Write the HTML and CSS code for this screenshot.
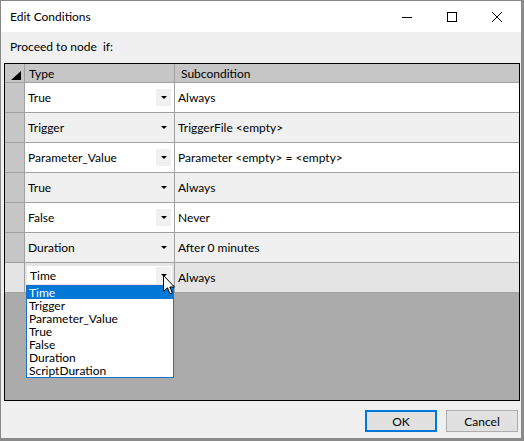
FILE: index.html
```html
<!DOCTYPE html>
<html>
<head>
<meta charset="utf-8">
<link rel="stylesheet" href="styles.css">
</head>
<body>
<div class="window">
  <div class="titlebar">
    <span class="title">Edit Conditions</span>
    <div class="controls">
      <span class="ctl"><svg width="10" height="10" viewBox="0 0 10 10"><path d="M0 5.5H10" stroke="#000" stroke-width="1"/></svg></span>
      <span class="ctl"><svg width="10" height="10" viewBox="0 0 10 10"><rect x="0.5" y="0.5" width="9" height="9" fill="none" stroke="#000" stroke-width="1"/></svg></span>
      <span class="ctl"><svg width="10" height="10" viewBox="0 0 10 10"><path d="M0 0L10 10M10 0L0 10" stroke="#000" stroke-width="1"/></svg></span>
    </div>
  </div>
  <div class="content">
    <div class="label">Proceed to node&nbsp; if:</div>
    <div class="grid">
      <div class="row header">
        <div class="rh corner"><svg width="10" height="9" viewBox="0 0 10 9"><polygon points="10,0 10,9 0,9" fill="#000"/></svg></div>
        <div class="c type">Type</div>
        <div class="c sub">Subcondition</div>
      </div>
      <div class="row white">
        <div class="rh"></div>
        <div class="c type"><span>True</span><span class="btn"><i class="tri"></i></span></div>
        <div class="c sub">Always</div>
      </div>
      <div class="row gray">
        <div class="rh"></div>
        <div class="c type"><span>Trigger</span><span class="btn"><i class="tri"></i></span></div>
        <div class="c sub">TriggerFile &lt;empty&gt;</div>
      </div>
      <div class="row white">
        <div class="rh"></div>
        <div class="c type"><span>Parameter_Value</span><span class="btn"><i class="tri"></i></span></div>
        <div class="c sub">Parameter &lt;empty&gt; = &lt;empty&gt;</div>
      </div>
      <div class="row gray">
        <div class="rh"></div>
        <div class="c type"><span>True</span><span class="btn"><i class="tri"></i></span></div>
        <div class="c sub">Always</div>
      </div>
      <div class="row white">
        <div class="rh"></div>
        <div class="c type"><span>False</span><span class="btn"><i class="tri"></i></span></div>
        <div class="c sub">Never</div>
      </div>
      <div class="row gray">
        <div class="rh"></div>
        <div class="c type"><span>Duration</span><span class="btn"><i class="tri"></i></span></div>
        <div class="c sub">After 0 minutes</div>
      </div>
      <div class="row edit">
        <div class="rh"></div>
        <div class="c type">
          <div class="combo"><span>Time</span><span class="btn"><i class="tri"></i></span></div>
          <div class="list">
            <div class="item sel">Time</div>
            <div class="item">Trigger</div>
            <div class="item">Parameter_Value</div>
            <div class="item">True</div>
            <div class="item">False</div>
            <div class="item">Duration</div>
            <div class="item">ScriptDuration</div>
          </div>
          <svg class="cursor" width="12" height="20" viewBox="0 0 12 20"><path d="M0.5 0.5V16.5L4.5 12.8L7 18.8L9.3 17.8L6.8 12H11.5Z" fill="#fff" stroke="#000" stroke-width="1" stroke-linejoin="round"/></svg>
        </div>
        <div class="c sub">Always</div>
      </div>
    </div>
    <div class="buttons">
      <button class="b ok">OK</button>
      <button class="b">Cancel</button>
    </div>
  </div>
</div>
</body>
</html>
```

FILE: styles.css
```css
* { box-sizing: border-box; }
html, body { margin: 0; padding: 0; background: #fff; }
body { font-family: "Segoe UI", Lato, "Noto Sans", sans-serif; font-size: 12px; color: #000; }

.window {
  width: 524px; height: 441px;
  border-left: 1px solid #888;
  border-top: 1px solid #888;
  border-right: 3px solid #8a8a8a;
  border-bottom: 3px solid #8a8a8a;
  display: flex; flex-direction: column;
  background: #f0f0f0;
}
.titlebar {
  height: 31px; background: #fff;
  display: flex; align-items: center;
  padding-left: 9px; padding-right: 2px;
}
.title { flex: 1; font-size: 12px; }
.controls { display: flex; height: 100%; }
.ctl { width: 45px; display: flex; align-items: center; justify-content: center; }
.ctl svg { display: block; }

.content { flex: 1; display: flex; flex-direction: column; padding: 0 0 0 3px; }
.label { margin: 7px 0 0 6px; height: 24px; line-height: 15px; }

.grid {
  width: 516px; height: 338px;
  border: 1px solid #000;
  background: #ababab;
  display: flex; flex-direction: column;
}
.row { display: flex; height: 30px; }
.row.header { height: 19px; background: #c6c6c6; }
.rh {
  width: 20px; flex: none;
  background: #c6c6c6;
  border-right: 1px solid #a0a0a0;
  border-bottom: 1px solid #a0a0a0;
}
.corner { display: flex; align-items: flex-end; justify-content: flex-end; padding: 0 3px 2px 0; }
.corner svg { display: block; }
.c {
  display: flex; align-items: center;
  border-right: 1px solid #a0a0a0;
  border-bottom: 1px solid #a0a0a0;
  white-space: nowrap;
}
.type { width: 150px; flex: none; padding-left: 3px; justify-content: space-between; padding-right: 3px; position: relative; }
.sub { flex: 1; padding-left: 3px; border-right: none; }
.header .type { padding-left: 4px; }
.header .sub { padding-left: 6px; }
.white .c { background: #fff; }
.gray .c { background: #f0f0f0; }
.edit .c, .edit .rh { background: #e4e4e4; }

.btn {
  width: 15px; height: 17px; background: #f0f0f0;
  display: flex; align-items: center; justify-content: center;
}
.tri {
  display: block; width: 0; height: 0;
  border-left: 3px solid transparent;
  border-right: 3px solid transparent;
  border-top: 3px solid #000;
}

.combo {
  position: absolute; left: 1px; top: 2px;
  width: 147px; height: 20px;
  background: #fff;
  border: 1px solid #e8e8e8;
  display: flex; align-items: center; justify-content: space-between;
  padding: 0 1px 0 3px;
}
.list {
  position: absolute; left: 1px; top: 22px;
  width: 148px;
  background: #fff;
  border: 1px solid #1a73c8;
  z-index: 2;
}
.item { height: 13px; line-height: 13px; padding-left: 2px; overflow: hidden; }
.item.sel { background: #0078d7; color: #fff; }
.cursor { position: absolute; left: 138px; top: 12px; z-index: 3; }

.buttons { display: flex; justify-content: flex-end; gap: 9px; padding: 9px 3px 0 0; }
.b {
  width: 72px; height: 22px;
  font: inherit; font-size: 12px;
  background: #e1e1e1;
  border: 1px solid #adadad;
  padding: 0;
}
.b.ok { border: 2px solid #0078d7; }
```
